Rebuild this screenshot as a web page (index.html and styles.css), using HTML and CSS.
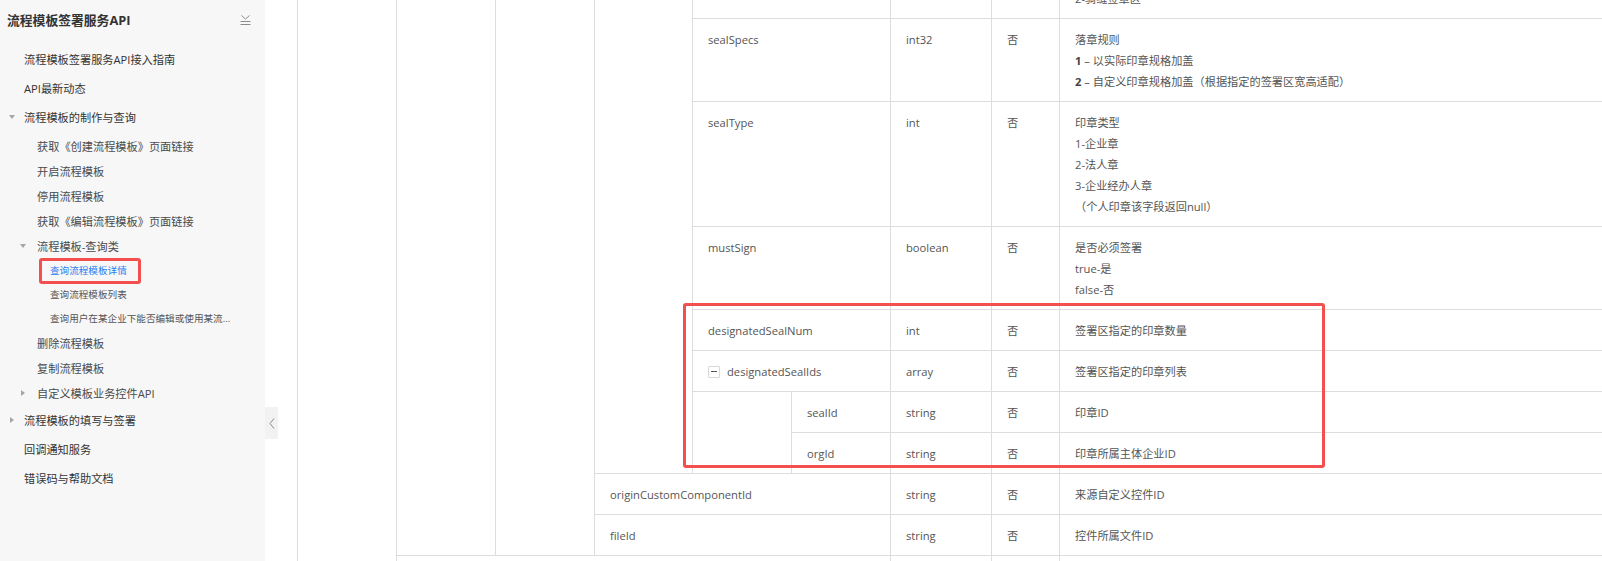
FILE: index.html
```html
<!DOCTYPE html>
<html lang="zh-CN">
<head>
<meta charset="utf-8">
<title>查询流程模板详情</title>
<link rel="stylesheet" href="styles.css">
</head>
<body>
<div class="page">
  <aside class="sidebar">
    <div class="side-head">
      <span class="side-title">流程模板签署服务API</span>
      <svg class="collapse-all" width="13" height="12" viewBox="0 0 13 12" fill="none" stroke="#8c8c8c" stroke-width="1">
        <polyline points="2.5,1.5 6.5,5 10.5,1.5"/>
        <line x1="1.5" y1="7.5" x2="11.5" y2="7.5"/>
        <line x1="1.5" y1="10.5" x2="11.5" y2="10.5"/>
      </svg>
    </div>
    <nav class="menu">
      <div class="item l1">流程模板签署服务API接入指南</div>
      <div class="item l1">API最新动态</div>
      <div class="item l1"><span class="caret down"></span>流程模板的制作与查询</div>
      <div class="group">
        <div class="item l2">获取《创建流程模板》页面链接</div>
        <div class="item l2">开启流程模板</div>
        <div class="item l2">停用流程模板</div>
        <div class="item l2">获取《编辑流程模板》页面链接</div>
        <div class="item l2"><span class="caret down"></span>流程模板-查询类</div>
        <div class="item l3 active">查询流程模板详情</div>
        <div class="item l3">查询流程模板列表</div>
        <div class="item l3">查询用户在某企业下能否编辑或使用某流...</div>
        <div class="item l2">删除流程模板</div>
        <div class="item l2">复制流程模板</div>
        <div class="item l2"><span class="caret right"></span>自定义模板业务控件API</div>
      </div>
      <div class="item l1"><span class="caret right"></span>流程模板的填写与签署</div>
      <div class="item l1">回调通知服务</div>
      <div class="item l1">错误码与帮助文档</div>
    </nav>
    <div class="side-toggle">
      <svg width="13" height="32" viewBox="0 0 13 32" fill="none" stroke="#8c8c8c" stroke-width="1">
        <polyline points="9,11.5 5,16.5 9,21.5"/>
      </svg>
    </div>
  </aside>

  <main class="content">
    <table class="params">
      <colgroup>
        <col class="c-indent">
        <col class="c-indent">
        <col class="c-indent">
        <col class="c-indent-s">
        <col class="c-indent">
        <col class="c-indent">
        <col class="c-type">
        <col class="c-req">
        <col class="c-desc">
      </colgroup>
      <tbody>
        <tr>
          <td rowspan="11"></td>
          <td rowspan="10"></td>
          <td rowspan="10"></td>
          <td rowspan="8"></td>
          <td colspan="2"></td>
          <td></td>
          <td></td>
          <td>2-骑缝签章区</td>
        </tr>
        <tr>
          <td colspan="2">sealSpecs</td>
          <td>int32</td>
          <td>否</td>
          <td>落章规则<br><b class="num">1</b> – 以实际印章规格加盖<br><b class="num">2</b> – 自定义印章规格加盖（根据指定的签署区宽高适配）</td>
        </tr>
        <tr>
          <td colspan="2">sealType</td>
          <td>int</td>
          <td>否</td>
          <td>印章类型<br>1-企业章<br>2-法人章<br>3-企业经办人章<br>（个人印章该字段返回null）</td>
        </tr>
        <tr>
          <td colspan="2">mustSign</td>
          <td>boolean</td>
          <td>否</td>
          <td>是否必须签署<br>true-是<br>false-否</td>
        </tr>
        <tr>
          <td colspan="2">designatedSealNum</td>
          <td>int</td>
          <td>否</td>
          <td>签署区指定的印章数量</td>
        </tr>
        <tr>
          <td colspan="2"><span class="toggle"></span>designatedSealIds</td>
          <td>array</td>
          <td>否</td>
          <td>签署区指定的印章列表</td>
        </tr>
        <tr>
          <td rowspan="2"></td>
          <td>sealId</td>
          <td>string</td>
          <td>否</td>
          <td>印章ID</td>
        </tr>
        <tr>
          <td>orgId</td>
          <td>string</td>
          <td>否</td>
          <td>印章所属主体企业ID</td>
        </tr>
        <tr>
          <td colspan="3">originCustomComponentId</td>
          <td>string</td>
          <td>否</td>
          <td>来源自定义控件ID</td>
        </tr>
        <tr>
          <td colspan="3">fileId</td>
          <td>string</td>
          <td>否</td>
          <td>控件所属文件ID</td>
        </tr>
        <tr>
          <td colspan="5"></td>
          <td></td>
          <td></td>
          <td></td>
        </tr>
      </tbody>
    </table>
    <div class="mark mark-table"></div>
  </main>
</div>
</body>
</html>
```

FILE: styles.css
```css
*,
*::before,
*::after {
  box-sizing: border-box;
}

html,
body {
  margin: 0;
  height: 100%;
  overflow: hidden;
  background: #ffffff;
}

body {
  font-family: "Open Sans", "Noto Sans CJK SC", sans-serif;
  color: #555555;
}

.page {
  display: flex;
  height: 561px;
}

/* ---------- Sidebar ---------- */
.sidebar {
  position: relative;
  flex: none;
  width: 265px;
  background: #f7f7f7;
}

.side-head {
  height: 44px;
  display: flex;
  align-items: flex-start;
  justify-content: space-between;
  padding: 11px 13px 0 7px;
}

.side-title {
  font-size: 12.8px;
  line-height: 18px;
  font-weight: 700;
  color: #333333;
  white-space: nowrap;
}

.collapse-all {
  margin-top: 3px;
}

.menu {
  display: flex;
  flex-direction: column;
}

.group {
  display: flex;
  flex-direction: column;
  padding-top: 2px;
}

.item {
  position: relative;
  display: flex;
  align-items: center;
  white-space: nowrap;
  font-size: 11.2px;
}

.item.l1 {
  height: 29px;
  padding-left: 24px;
  color: #333333;
}

.item.l2 {
  height: 25px;
  padding-left: 37px;
  color: #4a4a4a;
}

.item.l3 {
  height: 24px;
  padding-left: 50px;
  font-size: 9.6px;
  color: #555555;
}

.item.active {
  color: #2b7cf3;
}

.item.active::after {
  content: "";
  position: absolute;
  left: 39px;
  top: 0;
  width: 102px;
  height: 26px;
  border: 3px solid #f24f4f;
  border-radius: 3px;
}

.caret {
  flex: none;
  display: flex;
  align-items: center;
  justify-content: center;
  width: 12px;
  height: 12px;
  margin-left: -18px;
  margin-right: 6px;
}

.l2 .caret {
  margin-left: -20px;
  margin-right: 8px;
}

.caret.down::before {
  content: "";
  border-left: 3px solid transparent;
  border-right: 3px solid transparent;
  border-top: 4px solid #a6a6a6;
}

.caret.right::before {
  content: "";
  border-top: 3px solid transparent;
  border-bottom: 3px solid transparent;
  border-left: 4px solid #a6a6a6;
}

.side-toggle {
  position: absolute;
  left: 100%;
  top: 407px;
  width: 13px;
  height: 32px;
  background: #f2f2f2;
  display: flex;
}

/* ---------- Content ---------- */
.content {
  position: relative;
  flex: 1;
  min-width: 0;
  padding-left: 32px;
}

.params {
  margin-top: -23px;
  width: 1322px;
  table-layout: fixed;
  border-collapse: collapse;
  font-size: 11.2px;
  line-height: 21px;
  color: #555555;
}

.c-indent { width: 99px; }
.c-indent-s { width: 98px; }
.c-type { width: 101px; }
.c-req { width: 68px; }
.c-desc { width: 560px; }

.params td {
  border: 1px solid #dddddd;
  padding: 10px 15px 9px;
  vertical-align: top;
  white-space: nowrap;
}

.num {
  font-weight: 700;
  color: #444444;
}

.toggle {
  display: inline-block;
  position: relative;
  width: 12px;
  height: 12px;
  margin-right: 7px;
  vertical-align: -2px;
  border: 1px solid #d9d9d9;
  border-radius: 1px;
  background: #ffffff;
}

.toggle::before {
  content: "";
  position: absolute;
  left: 2px;
  right: 2px;
  top: 4px;
  height: 1px;
  background: #555555;
}

.mark-table {
  position: absolute;
  left: 418px;
  top: 303px;
  width: 642px;
  height: 165px;
  border: 3px solid #f24f4f;
  border-radius: 3px;
}
```
